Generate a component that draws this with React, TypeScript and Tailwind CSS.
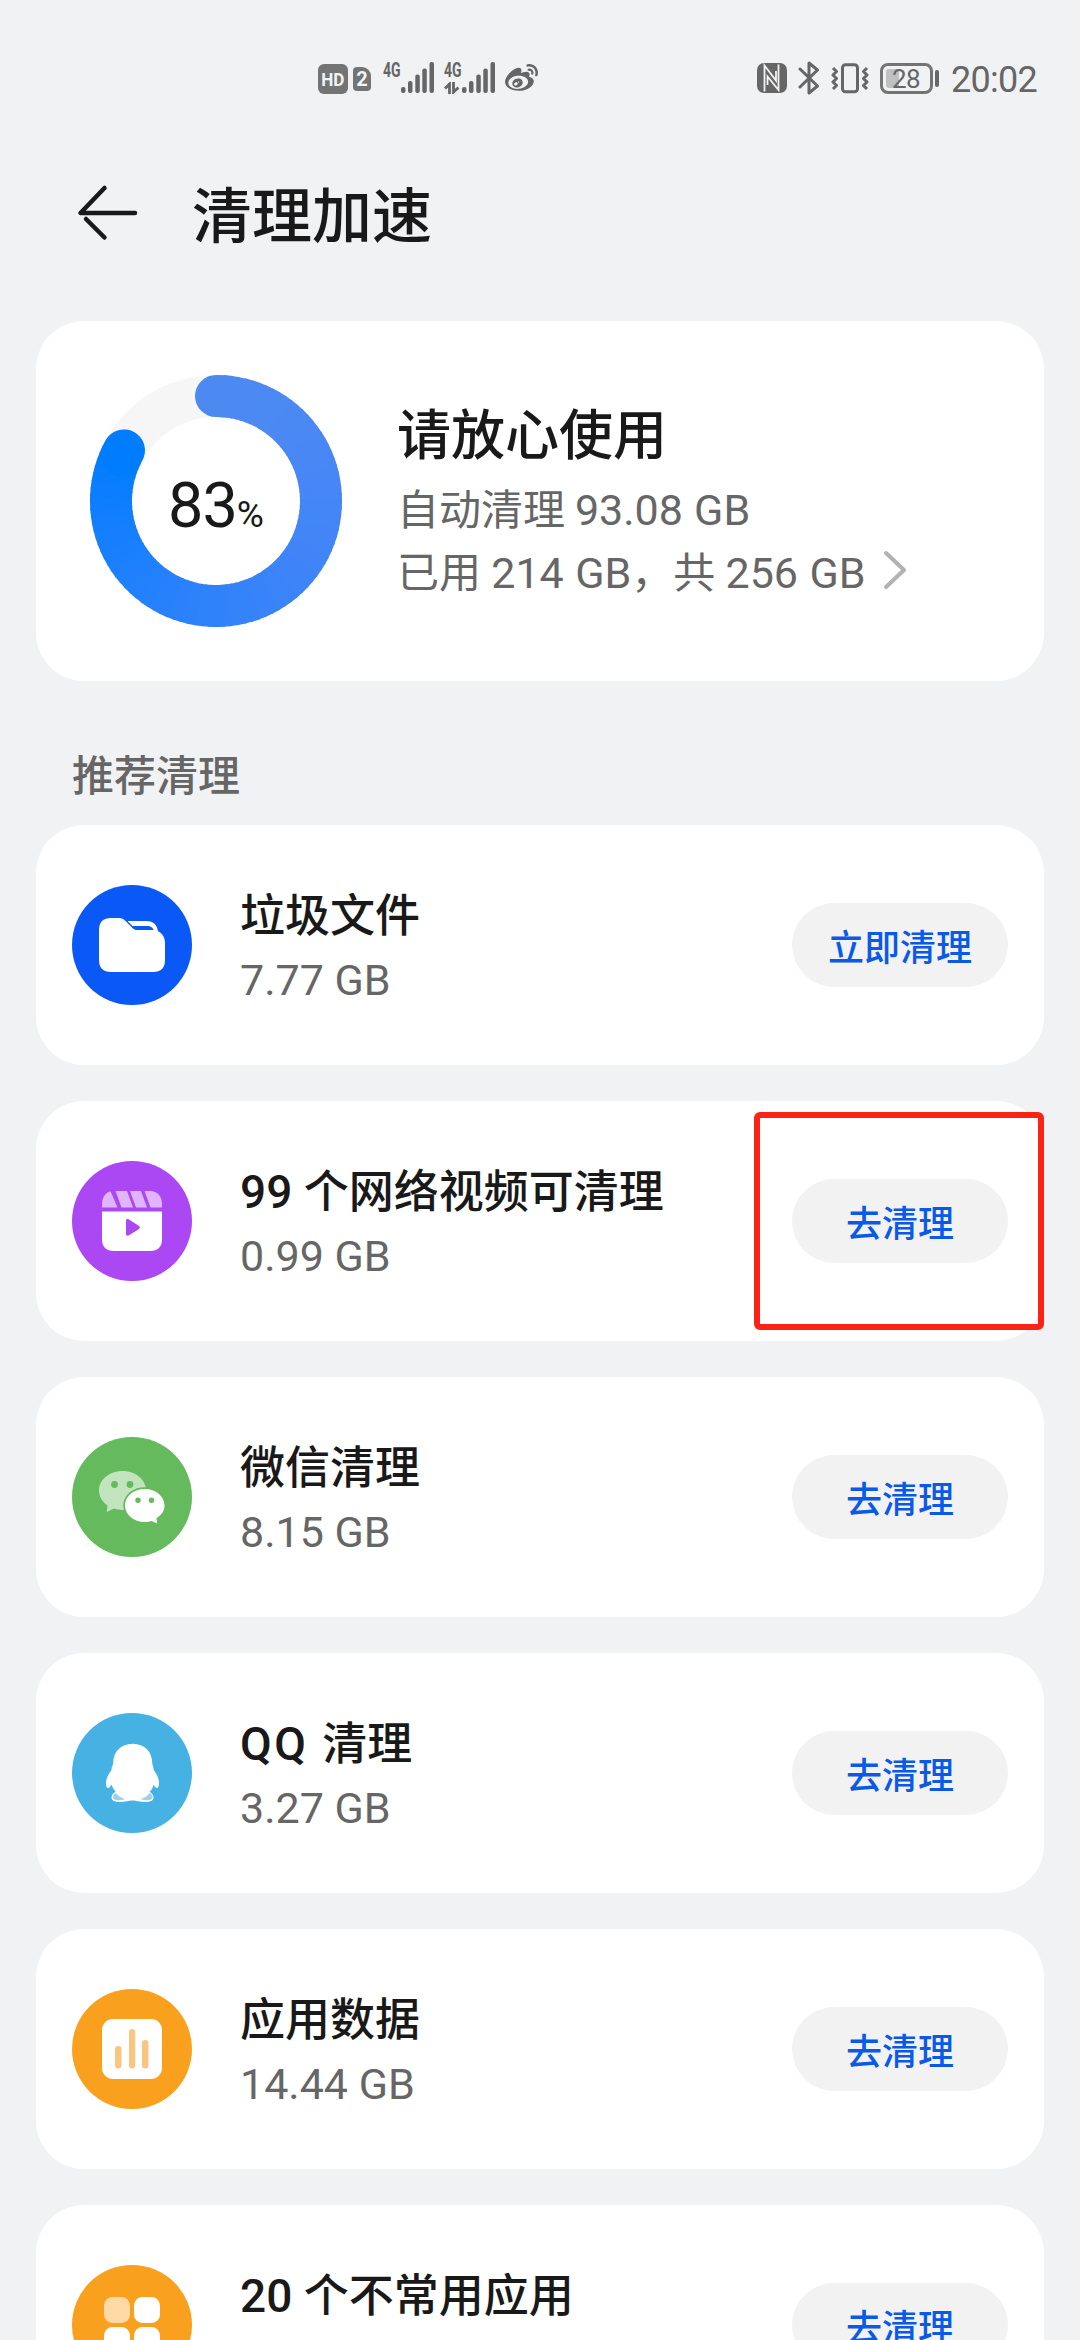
import type { ReactNode } from 'react'
import { FaWeibo } from 'react-icons/fa'

const CJK = "font-['Noto_Sans_CJK_SC',sans-serif]"
const LATIN = "font-['Roboto','Noto_Sans_CJK_SC',sans-serif]"

const USED_PERCENT = 83

type CleanItem = {
  icon: ReactNode
  color: string
  count?: string
  title: string
  size?: string
  action: string
  highlighted?: boolean
}

function FolderIcon() {
  return (
    <svg viewBox="0 0 120 120" className="size-full">
      <path d="M27 45c0-8 4-12 12-12h6c4 0 6 .5 8 2.500L60.500 43c1.500 1.500 2.500 2 5 2H83c6 1.500 10 6 10 13v17c0 8-4 12-12 12H39c-8 0-12-4-12-12z" fill="#fff" />
      <path d="M55.500 36H74c7 0 11 3 12.300 11.500L82 46c-1-3.500-3-5-7-5H60.500z" fill="#fff" />
    </svg>
  )
}

function VideoIcon() {
  return (
    <svg viewBox="0 0 120 120" className="size-full">
      <g fill="#dfb6fc">
        <path d="M30 46.500V43c0-6 3-11 8.500-12.700L45.500 46.500z" />
        <path d="M43.500 30h11.500l6 16.500H49.500z" />
        <path d="M58 30h11l6 16.500H64z" />
        <path d="M72.500 30H78c8 0 12 6 12 13v3.500H78.500z" />
      </g>
      <path d="M30 50.500h60V78c0 8-4 12-12 12H42c-8 0-12-4-12-12z" fill="#fff" />
      <path d="M54 60c0-2 1.500-2.500 3-1.500l9.700 6.300c1.500 1 1.500 2.400 0 3.400L57 74.300c-1.500 1-3 .2-3-1.300z" fill="#ab47f3" />
    </svg>
  )
}

function WechatIcon() {
  return (
    <svg viewBox="0 0 120 120" className="size-full">
      <path d="M50.500 34C37.500 34 27 42.500 27 53.500c0 6 3 11 8.500 15L34.800 75l7.200-3.400c3 1 6 1.400 8.500 1.400C63.500 73 74 64.500 74 53.500S63.500 34 50.500 34z" fill="#c1e3be" />
      <circle cx="42.500" cy="47.500" r="3.400" fill="#65ba5d" />
      <circle cx="58" cy="47.500" r="3.400" fill="#65ba5d" />
      <ellipse cx="72.700" cy="68.500" rx="21.500" ry="18.300" fill="#65ba5d" />
      <path d="M72.700 52C61.800 52 53 59.400 53 68.500S61.800 85 72.700 85c2.400 0 4.800-.3 6.900-1.100l5.600 2.600-.7-5.300c4.800-3 8-7.500 8-12.700 0-9.100-8.900-16.500-19.800-16.500z" fill="#fff" />
      <circle cx="66" cy="63.200" r="2.700" fill="#65ba5d" />
      <circle cx="79.500" cy="63.200" r="2.700" fill="#65ba5d" />
    </svg>
  )
}

function PenguinIcon() {
  return (
    <svg viewBox="0 0 120 120" className="size-full">
      <path d="M60.700 30.700c-12 0-19.500 8.500-19.500 19 0 2.500-1.700 4-1.700 7.300-3 4-5.500 8.500-5.500 13 0 3 .8 5 2 5s2.500-1.500 3.500-3.500c1 3 2.500 5.500 4.500 7.500l8 7h17.500l8-7c2-2 3.500-4.500 4-7.500 1 2 2.300 3.500 3.500 3.500s2-2 2-5c0-4.500-2.300-9-5.300-13 0-3.300-1.500-4.800-1.500-7.300 0-10.500-7.500-19-19.500-19z" fill="#fff" />
      <path d="M44 78.500c-3 1.500-4.500 3.500-4.500 6 0 3 3 4.500 8 4.500 6 0 9-1.600 13-1.600s7 1.600 13 1.600c5 0 8-1.500 8-4.500 0-2.500-1.500-4.500-4.500-6z" fill="#fff" />
      <path d="M44 80c-2 1-3 2.500-3 4.200 0 2.300 2.500 3 6 3 2.500 0 4.500-.5 6-1.200C49 85 46 83 44 80z" fill="#9fd0ee" />
      <path d="M77.500 80c2 1 3 2.500 3 4.200 0 2.300-2.500 3-6 3-2.500 0-4.500-.5-6-1.200 4-1 7-3 9-6z" fill="#9fd0ee" />
    </svg>
  )
}

function ChartIcon() {
  return (
    <svg viewBox="0 0 120 120" className="size-full">
      <rect x="30" y="30" width="60" height="60" rx="11" fill="#fff" />
      <g fill="#f9c681">
        <rect x="43" y="57" width="6.500" height="22.500" rx="3" />
        <rect x="57" y="40" width="6.200" height="39.500" rx="3" />
        <rect x="70" y="51" width="6.500" height="28.500" rx="3" />
      </g>
    </svg>
  )
}

function AppsIcon() {
  return (
    <svg viewBox="0 0 120 120" className="size-full" fill="#fff">
      <rect x="32" y="32" width="26" height="26" rx="8.500" fill="#fdd9a5" />
      <rect x="62" y="32" width="26" height="26" rx="8.500" />
      <rect x="32" y="62" width="26" height="26" rx="8.500" />
      <rect x="62" y="62" width="26" height="26" rx="8.500" />
    </svg>
  )
}

const ITEMS: CleanItem[] = [
  { icon: <FolderIcon />, color: 'bg-[#0a59f7]', title: '垃圾文件', size: '7.77 GB', action: '立即清理' },
  { icon: <VideoIcon />, color: 'bg-[#ab47f3]', count: '99', title: '个网络视频可清理', size: '0.99 GB', action: '去清理', highlighted: true },
  { icon: <WechatIcon />, color: 'bg-[#65ba5d]', title: '微信清理', size: '8.15 GB', action: '去清理' },
  { icon: <PenguinIcon />, color: 'bg-[#46b1e3]', count: 'QQ', title: '清理', size: '3.27 GB', action: '去清理' },
  { icon: <ChartIcon />, color: 'bg-[#f9a01e]', title: '应用数据', size: '14.44 GB', action: '去清理' },
  { icon: <AppsIcon />, color: 'bg-[#f9a01e]', count: '20', title: '个不常用应用', action: '去清理' },
]

function SignalBars() {
  return (
    <svg viewBox="0 0 33 32" className="h-8 w-[33px]" fill="#666">
      <rect x="0" y="25" width="4.500" height="6" rx="2" />
      <rect x="7" y="19" width="4.500" height="12" rx="2" />
      <rect x="14.300" y="12.500" width="4.500" height="18.500" rx="2" />
      <rect x="21.300" y="6.500" width="4.500" height="24.500" rx="2" />
      <rect x="28.500" y="0" width="4.500" height="31" rx="2" />
    </svg>
  )
}

function StatusBar() {
  return (
    <div className={`flex h-[158px] items-start pt-[62px] text-[#666] ${LATIN}`}>
      <div className="ml-[318px] mt-[2px] flex h-[30px] w-[30px] items-center justify-center rounded-[6px] bg-[#747474] text-[19px] font-bold leading-none text-[#f1f2f4]">
        <span className="scale-x-90">HD</span>
      </div>
      <div className="ml-[5px] mt-[5px] flex h-[24px] w-[18px] items-center justify-center rounded-[4px] rounded-tr-[9px] bg-[#747474] text-[20px] font-bold leading-none text-[#f1f2f4]">
        2
      </div>
      <span className="-mt-px ml-[12px] w-[18px] text-[20px] font-bold leading-[18px]">
        <span className="inline-block origin-left scale-x-70">4G</span>
      </span>
      <SignalBars />
      <div className="-mt-px ml-[10px] flex w-[18px] flex-col text-[20px] font-bold leading-[18px]">
        <span className="inline-block w-[25px] origin-left scale-x-70">4G</span>
        <svg viewBox="0 0 16 12" className="mt-[3px] h-3 w-4" fill="none" stroke="#666" strokeWidth="2.800">
          <path d="M5.500 12V2L1 6.500M9.500 0v10l5-4.500" />
        </svg>
      </div>
      <SignalBars />
      <FaWeibo className="ml-[10px] size-[33px]" />

      <svg viewBox="0 0 30 30" className="ml-[219px] mt-px size-[30px]">
        <rect width="30" height="30" rx="7" fill="#666" />
        <path d="M7.500 28.500V2.500L19 17.500V8M21.500 1.500V27L10.500 13.500V22" fill="none" stroke="#f1f2f4" strokeWidth="1.800" />
      </svg>
      <svg viewBox="0 0 22 34" className="-mt-px ml-[11px] h-[34px] w-[22px]" fill="none" stroke="#666" strokeWidth="3" strokeLinecap="round" strokeLinejoin="round">
        <path d="M2 8l17.500 17-8.500 7V2l8.500 7L2 26" />
      </svg>
      <svg viewBox="0 0 38 32" className="ml-[11px] mt-px h-8 w-[38px]" fill="none" stroke="#666" strokeWidth="3" strokeLinejoin="round">
        <rect x="11.500" y="1.800" width="15" height="27" rx="3" />
        <path d="M2 5l3.500 3.500L2 12l3.500 3.500L2 19l3.500 3.500L2 26M36 5l-3.500 3.500L36 12l-3.500 3.500L36 19l-3.500 3.500L36 26" />
      </svg>
      <div className="ml-[11px] mt-px flex h-[31px] w-[53px] items-center rounded-[8px] border-[3px] border-[#747474] p-[3px]">
        <div className="h-full w-[13px] shrink-0 rounded-l-[3px] bg-[#bfc0c1]" />
        <span className="-ml-[7px] text-[26px] leading-none tracking-[-0.500px]">28</span>
      </div>
      <div className="ml-[2px] mt-[8px] h-[17px] w-[4px] rounded-sm bg-[#666]" />
      <span className="ml-[12px] mt-[-3px] text-[36px] leading-[42px] tracking-[-0.700px]">20:02</span>
    </div>
  )
}

// Point on the ring, fraction measured clockwise from the top
function ringPoint(fraction: number) {
  const angle = fraction * Math.PI * 2
  return [126 + 105 * Math.sin(angle), 126 - 105 * Math.cos(angle)]
}

function UsageRing() {
  const used = USED_PERCENT / 100
  const steps = 90
  const mix = (a: number, b: number, t: number) => Math.round(a + (b - a) * t)

  return (
    <div className="relative size-[252px]">
      <svg viewBox="0 0 252 252" className="size-full" fill="none" strokeWidth="42">
        <circle cx="126" cy="126" r="105" stroke="#f6f6f6" />
        {Array.from({ length: steps }, (_, i) => {
          const t = i / (steps - 1)
          const [x1, y1] = ringPoint((used * i) / steps)
          const [x2, y2] = ringPoint(Math.min(used, (used * (i + 1.300)) / steps))
          return (
            <path
              key={i}
              d={`M${x1} ${y1}A105 105 0 0 1 ${x2} ${y2}`}
              stroke={`rgb(${mix(76, 0, t * t)},${mix(138, 125, t)},${mix(242, 255, t)})`}
              strokeLinecap={i === 0 || i === steps - 1 ? 'round' : 'butt'}
            />
          )
        })}
      </svg>
      <div className={`absolute inset-0 flex items-baseline justify-center pt-[91px] text-[#191919] ${LATIN}`}>
        <span className="text-[63px] leading-[80px] tracking-[-1px]">{USED_PERCENT}</span>
        <span className="text-[37px] leading-none">%</span>
      </div>
    </div>
  )
}

function SummaryCard() {
  return (
    <section className="mx-9 flex h-[360px] items-center rounded-[48px] bg-white pl-[54px]">
      <UsageRing />
      <div className={`-mt-[9px] ml-[55px] ${CJK}`}>
        <h2 className="mb-[3px] text-[54px] font-medium leading-[80px] text-[#191919]">请放心使用</h2>
        <p className="text-[42px] leading-[63px] text-[#666] [word-spacing:0.500px]">
          自动清理 <span className={`text-[43px] leading-none ${LATIN}`}>93.08 GB</span>
        </p>
        <p className="mt-px flex items-center text-[42px] leading-[62px] text-[#666] [word-spacing:0.800px]">
          <span>
            已用 <span className={`text-[43px] leading-none ${LATIN}`}>214 GB</span>，共 <span className={`text-[43px] leading-none ${LATIN}`}>256 GB</span>
          </span>
          <svg viewBox="0 0 24 40" className="ml-[17px] h-10 w-6" fill="none" stroke="#b2b2b2" strokeWidth="4" strokeLinecap="round" strokeLinejoin="round">
            <path d="M3 3l18 17L3 37" />
          </svg>
        </p>
      </div>
    </section>
  )
}

function CleanRow({ item }: { item: CleanItem }) {
  return (
    <li className="relative flex h-60 items-center rounded-[48px] bg-white px-9">
      <div className={`size-[120px] shrink-0 rounded-full ${item.color}`}>{item.icon}</div>
      <div className={`ml-12 mt-px flex-1 ${CJK}`}>
        <h3 className="mb-[2px] text-[45px] font-medium leading-[66px] text-[#191919]">
          {item.count && (
            <span className={`text-[46px] leading-none ${item.count === 'QQ' ? 'tracking-[2.500px]' : ''} ${LATIN}`}>
              {item.count}{' '}
            </span>
          )}
          {item.title}
        </h3>
        <p className={`h-[64px] text-[43px] leading-[65px] text-[#666] ${LATIN}`}>{item.size}</p>
      </div>
      <button className="h-[84px] w-[216px] rounded-full bg-[#f2f2f2] text-[36px] font-medium leading-[50px] text-[#0a59e7]">
        {item.action}
      </button>
      {item.highlighted && (
        <div className="absolute right-0 top-[11px] h-[218px] w-[290px] rounded-[6px] border-[6px] border-[#fb2216]" />
      )}
    </li>
  )
}

export default function App() {
  return (
    <div className={`h-[2340px] w-[1080px] overflow-hidden bg-[#f1f2f4] ${CJK}`}>
      <StatusBar />

      <header className="flex h-[163px] items-start pl-[76px]">
        <svg viewBox="0 0 64 60" className="mt-[25px] h-[60px] w-16" fill="none" stroke="#191919" strokeWidth="4.500" strokeLinecap="round" strokeLinejoin="round">
          <path d="M28.500 5L4.500 30H59M10 36l18.500 18.500" />
        </svg>
        <h1 className="ml-[52px] mt-[9px] text-[60px] font-medium leading-[90px] text-[#191919]">清理加速</h1>
      </header>

      <SummaryCard />

      <h2 className="flex h-36 items-center pl-[72px] pt-[39px] text-[42px] font-medium leading-none text-[#666]">推荐清理</h2>

      <ul className="mx-9 flex flex-col gap-9">
        {ITEMS.map(item => (
          <CleanRow key={item.title} item={item} />
        ))}
      </ul>
    </div>
  )
}
